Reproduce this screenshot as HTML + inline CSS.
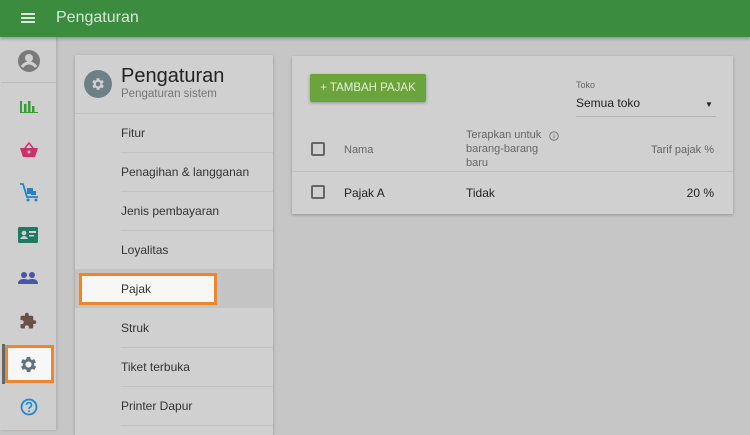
<!DOCTYPE html>
<html><head><style>
*{margin:0;padding:0;box-sizing:border-box}
body{width:750px;height:430px;overflow:hidden;background:#c6c6c6;font-family:"Liberation Sans",sans-serif;position:relative;color:#222}
.top{position:absolute;left:0;top:0;width:750px;height:37px;background:#3c8c3f;box-shadow:0 2px 3px rgba(0,0,0,.25);z-index:3}
.top .t{position:absolute;left:56px;top:9px;color:#d8ead8;font-size:16px}
.ham{position:absolute;left:21px;top:13px;width:14px;height:2px;background:#d8ead8;box-shadow:0 4px 0 #d8ead8,0 8px 0 #d8ead8}
.side{position:absolute;left:0;top:37px;width:56px;height:393px;background:#cfcfcf;box-shadow:1px 0 3px rgba(0,0,0,.15)}
.ic{position:absolute;left:18px}
.card{position:absolute;background:#d0d0d0;box-shadow:0 1px 3px rgba(0,0,0,.25)}
.item{position:absolute;left:46px;font-size:12px;color:#333}
.line{position:absolute;left:46px;right:0;height:1px;background:#c2c2c2}
.cb{position:absolute;width:14px;height:14px;border:2px solid #666;border-radius:2px}
</style></head><body>
<div class="top"><div class="ham"></div><div class="t">Pengaturan</div></div>
<div class="side">
 <svg class="ic" style="top:12px;left:17px" width="24" height="24" viewBox="0 0 24 24"><circle cx="12" cy="12" r="11" fill="#7a7a7a"/><circle cx="12" cy="9" r="4" fill="#cfcfcf"/><path d="M5 18c2-3 4.5-4 7-4s5 1 7 4" stroke="#cfcfcf" stroke-width="3" fill="none"/></svg>
 <div style="position:absolute;left:1px;right:0;top:45px;height:1px;background:#bcbcbc"></div>
 <svg class="ic" style="top:62px;left:20px" width="18" height="14"><path d="M1 2v12h17" stroke="#3c9a3c" stroke-width="2" fill="none"/><rect x="4" y="5" width="2.5" height="8" fill="#3c9a3c"/><rect x="8" y="2" width="2.5" height="11" fill="#3c9a3c"/><rect x="12" y="7" width="2.5" height="6" fill="#3c9a3c"/></svg>
 <svg class="ic" style="top:105px;left:19px" width="20" height="16"><path d="M6 6l4-5 4 5" stroke="#d02e6a" stroke-width="1.5" fill="none"/><path d="M1 6h18l-3 9H4z" fill="#d02e6a"/><circle cx="10" cy="10" r="1.5" fill="#cfcfcf"/></svg>
 <svg class="ic" style="top:145px;left:19px" width="20" height="20"><path d="M1 2h3l4 13h11" stroke="#2a7fc6" stroke-width="1.8" fill="none"/><rect x="8" y="6" width="6" height="6" fill="#2a7fc6"/><rect x="12" y="9" width="5" height="4" fill="#2a7fc6"/><circle cx="9" cy="18" r="1.5" fill="#2a7fc6"/><circle cx="17" cy="18" r="1.5" fill="#2a7fc6"/></svg>
 <svg class="ic" style="top:190px;left:18px" width="20" height="16"><rect width="20" height="16" rx="1.5" fill="#1f7a62"/><circle cx="6" cy="6" r="2.3" fill="#cfcfcf"/><path d="M2 12c1-2 2.5-3 4-3s3 1 4 3z" fill="#cfcfcf"/><rect x="11" y="4" width="7" height="2" fill="#cfcfcf"/><rect x="11" y="8" width="5" height="1.5" fill="#cfcfcf"/></svg>
 <svg class="ic" style="top:234px;left:18px" width="20" height="14"><circle cx="6" cy="4" r="3" fill="#4a55a8"/><circle cx="14" cy="4" r="3" fill="#4a55a8"/><path d="M0 13c0-4 3-5 6-5s6 1 6 5zM8 13c0-4 3-5 6-5s6 1 6 5z" fill="#4a55a8"/></svg>
 <svg class="ic" style="top:275px;left:19px" width="18" height="18" viewBox="0 0 24 24"><path d="M20.5 11H19V7a2 2 0 0 0-2-2h-4V3.5a2.5 2.5 0 0 0-5 0V5H4a2 2 0 0 0-2 2v3.8h1.5a2.7 2.7 0 0 1 0 5.4H2V20a2 2 0 0 0 2 2h3.8v-1.5a2.7 2.7 0 0 1 5.4 0V22H17a2 2 0 0 0 2-2v-4h1.5a2.5 2.5 0 0 0 0-5z" fill="#6b5048"/></svg>
 <div style="position:absolute;left:2px;top:307px;width:3px;height:40px;background:#5a6a70"></div>
 <div style="position:absolute;left:5px;top:308px;width:49px;height:38px;background:#f7f7f7;border:3px solid #f0852e"></div>
 <svg style="position:absolute;left:18px;top:317px" width="21" height="21" viewBox="0 0 24 24"><path d="M19.4 13a7.6 7.6 0 0 0 0-2l2.1-1.6-2-3.5-2.5 1a7.5 7.5 0 0 0-1.7-1L15 3.3h-4l-.4 2.6a7.5 7.5 0 0 0-1.7 1l-2.5-1-2 3.5L6.6 11a7.6 7.6 0 0 0 0 2l-2.1 1.6 2 3.5 2.5-1a7.5 7.5 0 0 0 1.7 1l.4 2.6h4l.4-2.6a7.5 7.5 0 0 0 1.7-1l2.5 1 2-3.5zM13 15.5a3.5 3.5 0 1 1 0-7 3.5 3.5 0 0 1 0 7z" fill="#5e7580" transform="translate(-1 0)"/></svg>
 <svg class="ic" style="top:361px;left:20px" width="18" height="18"><circle cx="9" cy="9" r="7.5" stroke="#1e88d0" stroke-width="1.8" fill="none"/><path d="M6.5 7a2.5 2.5 0 1 1 3.5 2.3c-.8.4-1 .9-1 1.7" stroke="#1e88d0" stroke-width="1.6" fill="none"/><circle cx="9" cy="13.3" r="1" fill="#1e88d0"/></svg>
</div>

<div class="card" style="left:75px;top:55px;width:198px;height:380px">
 <svg style="position:absolute;left:9px;top:15px" width="28" height="28" viewBox="0 0 28 28"><circle cx="14" cy="14" r="14" fill="#6e8087"/><g transform="translate(6 6) scale(.67)"><path d="M19.4 13a7.6 7.6 0 0 0 0-2l2.1-1.6-2-3.5-2.5 1a7.5 7.5 0 0 0-1.7-1L15 3.3h-4l-.4 2.6a7.5 7.5 0 0 0-1.7 1l-2.5-1-2 3.5L6.6 11a7.6 7.6 0 0 0 0 2l-2.1 1.6 2 3.5 2.5-1a7.5 7.5 0 0 0 1.7 1l.4 2.6h4l.4-2.6a7.5 7.5 0 0 0 1.7-1l2.5 1 2-3.5zM13 15.5a3.5 3.5 0 1 1 0-7 3.5 3.5 0 0 1 0 7z" fill="#d0d0d0" transform="translate(-1 0)"/></g></svg>
 <div style="position:absolute;left:46px;top:10px;font-size:20px;color:#222">Pengaturan</div>
 <div style="position:absolute;left:46px;top:33px;font-size:11.5px;color:#777">Pengaturan sistem</div>
 <div style="position:absolute;left:0;right:0;top:58px;height:1px;background:#c2c2c2"></div>
 <div class="item" style="top:71px">Fitur</div><div class="line" style="top:97px"></div>
 <div class="item" style="top:110px">Penagihan &amp; langganan</div><div class="line" style="top:136px"></div>
 <div class="item" style="top:149px">Jenis pembayaran</div><div class="line" style="top:175px"></div>
 <div class="item" style="top:188px">Loyalitas</div>
 <div style="position:absolute;left:0;right:0;top:214px;height:39px;background:#c4c4c4"></div>
 <div style="position:absolute;left:4px;top:218px;width:138px;height:32px;background:#f7f7f7;border:3px solid #f0852e"></div>
 <div class="item" style="top:227px">Pajak</div>
 <div class="item" style="top:266px">Struk</div><div class="line" style="top:292px"></div>
 <div class="item" style="top:305px">Tiket terbuka</div><div class="line" style="top:331px"></div>
 <div class="item" style="top:344px">Printer Dapur</div><div class="line" style="top:370px"></div>
</div>

<div class="card" style="left:292px;top:56px;width:441px;height:158px">
 <div style="position:absolute;left:18px;top:18px;width:116px;height:28px;background:#6ba43a;border-radius:2px;box-shadow:0 1px 3px rgba(0,0,0,.3);color:#e6f0dc;font-size:11.5px;line-height:28px;text-align:center">+ TAMBAH PAJAK</div>
 <div style="position:absolute;left:284px;top:24px;font-size:9px;color:#666">Toko</div>
 <div style="position:absolute;left:284px;top:40px;font-size:12px;color:#222">Semua toko</div>
 <div style="position:absolute;left:413px;top:44px;font-size:8px;color:#222">▼</div>
 <div style="position:absolute;left:284px;top:60px;width:140px;height:1px;background:#b5b5b5"></div>
 <div class="cb" style="left:19px;top:86px"></div>
 <div style="position:absolute;left:52px;top:88px;font-size:11px;color:#666">Nama</div>
 <div style="position:absolute;left:174px;top:72px;font-size:11px;color:#666;line-height:14px">Terapkan untuk<br>barang-barang<br>baru</div>
 <svg style="position:absolute;left:257px;top:75px" width="10" height="10"><circle cx="5" cy="5" r="4.3" stroke="#777" fill="none"/><path d="M5 4.3v3M5 2.6v.8" stroke="#777"/></svg>
 <div style="position:absolute;right:19px;top:88px;font-size:11px;color:#666">Tarif pajak %</div>
 <div style="position:absolute;left:0;right:0;top:115px;height:1px;background:#c0c0c0"></div>
 <div class="cb" style="left:19px;top:129px"></div>
 <div style="position:absolute;left:52px;top:130px;font-size:12px">Pajak A</div>
 <div style="position:absolute;left:174px;top:130px;font-size:12px">Tidak</div>
 <div style="position:absolute;right:19px;top:130px;font-size:12px">20 %</div>
</div>
</body></html>
